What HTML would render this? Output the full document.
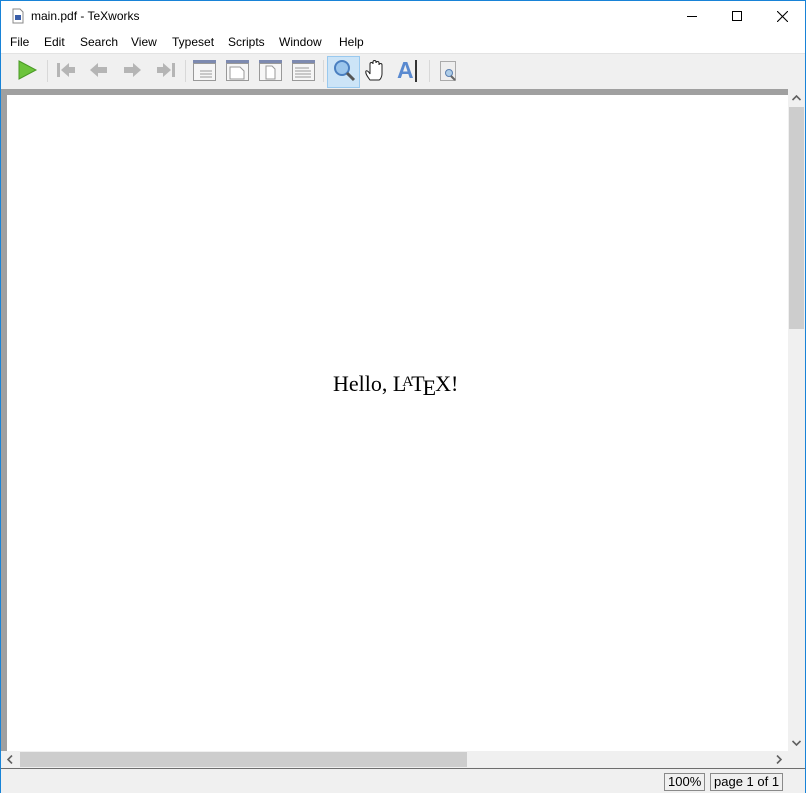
<!DOCTYPE html>
<html><head><meta charset="utf-8"><style>
*{margin:0;padding:0;box-sizing:border-box}
body{width:806px;height:793px;overflow:hidden;background:#f0f0f0;font-family:"Liberation Sans",sans-serif;font-size:12px;color:#000;position:relative}
.win{position:absolute;left:0;top:0;width:806px;height:793px;border:1px solid #1883d7;}
.title{position:absolute;left:0;top:0;width:804px;height:31px;background:#fff}
.title .t{position:absolute;left:30px;top:8px;font-size:12px}
.menu{position:absolute;left:0;top:31px;width:804px;height:21px;background:#fff}
.menu span{position:absolute;top:3px;font-size:12px}
.tb{position:absolute;left:0;top:52px;width:804px;height:36px;background:#f0f0f0;border-top:1px solid #e3e3e3}
.ic{position:absolute;top:4px;width:24px;height:24px}
.sep{position:absolute;top:6px;width:1px;height:22px;background:#d8d8d8}
.frame{position:absolute;left:0;top:88px;width:787px;height:662px;background:#a0a0a0}
.page{position:absolute;left:6px;top:94px;width:781px;height:656px;background:#fff}
.vs{position:absolute;left:787px;top:88px;width:17px;height:662px;background:#f0f0f0}
.hs{position:absolute;left:0;top:750px;width:787px;height:17px;background:#f0f0f0}
.status{position:absolute;left:0;top:767px;width:804px;height:25px;background:#f0f0f0;border-top:1px solid #6e6e6e}
.box{position:absolute;top:4px;height:18px;border:1px solid #8a8a8a;font-size:13px;line-height:16px;padding:0 3px}
.tex{position:absolute;left:332px;top:370px;font-family:"Liberation Serif",serif;font-size:22px;white-space:nowrap}
</style></head><body><div class="win">
<div class="title">
<svg style="position:absolute;left:11px;top:7px" width="12" height="16"><path d="M1 1h7l3 3v11H1z" fill="#fff" stroke="#888"/><rect x="3" y="7" width="6" height="5" fill="#3a5ea8"/></svg>
<span class="t">main.pdf - TeXworks</span>
<div style="position:absolute;left:686px;top:15px;width:10px;height:1px;background:#000"></div>
<div style="position:absolute;left:731px;top:10px;width:10px;height:10px;border:1px solid #000"></div>
<svg style="position:absolute;left:776px;top:10px" width="11" height="11"><path d="M0 0L11 11M11 0L0 11" stroke="#000" stroke-width="1.1"/></svg>
</div>
<div class="menu">
<span style="left:9px">File</span><span style="left:43px">Edit</span><span style="left:79px">Search</span><span style="left:130px">View</span><span style="left:171px">Typeset</span><span style="left:227px">Scripts</span><span style="left:278px">Window</span><span style="left:338px">Help</span>
</div>
<div class="tb">
<svg class="ic" style="left:14px"><path d="M4 3L21 12L4 21z" fill="#6cc43c" stroke="#4a9a26"/></svg>
<div class="sep" style="left:46px"></div>
<svg class="ic" style="left:53px"><rect x="3" y="5" width="3" height="14" fill="#b5b5b5"/><path d="M7 12l8-7v4h6v6h-6v4z" fill="#b5b5b5"/></svg>
<svg class="ic" style="left:86px"><path d="M3 12l8-7v4h9v6h-9v4z" fill="#b5b5b5"/></svg>
<svg class="ic" style="left:119px"><path d="M21 12l-8-7v4H4v6h9v4z" fill="#b5b5b5"/></svg>
<svg class="ic" style="left:153px"><rect x="18" y="5" width="3" height="14" fill="#b5b5b5"/><path d="M17 12l-8-7v4H3v6h6v4z" fill="#b5b5b5"/></svg>
<div class="sep" style="left:184px"></div>
<svg class="ic" style="left:191px"><rect x="1" y="2" width="23" height="3" fill="#7d8ab0"/><rect x="1.5" y="5.5" width="22" height="17" fill="#f6f6f6" stroke="#999"/><path d="M8 13h12M8 16h12M8 19h12" stroke="#999"/></svg>
<svg class="ic" style="left:224px"><rect x="1" y="2" width="23" height="3" fill="#7d8ab0"/><rect x="1.5" y="5.5" width="22" height="17" fill="#f6f6f6" stroke="#999"/><path d="M5 9h10l4 4v8H5z" fill="#fff" stroke="#999"/></svg>
<svg class="ic" style="left:257px"><rect x="1" y="2" width="23" height="3" fill="#7d8ab0"/><rect x="1.5" y="5.5" width="22" height="17" fill="#f6f6f6" stroke="#999"/><path d="M8 8h6l3 3v10H8z" fill="#fff" stroke="#999"/></svg>
<svg class="ic" style="left:290px"><rect x="1" y="2" width="23" height="3" fill="#7d8ab0"/><rect x="1.5" y="5.5" width="22" height="17" fill="#f6f6f6" stroke="#999"/><path d="M4 10h14M4 13h16M4 16h16M4 19h16" stroke="#999"/></svg>
<div class="sep" style="left:322px"></div>
<div style="position:absolute;left:326px;top:2px;width:33px;height:32px;background:#cce4f7;border:1px solid #99c9ef"></div>
<svg class="ic" style="left:331px"><circle cx="10" cy="10" r="7" fill="#9cc6ec" stroke="#4a7fc0" stroke-width="2"/><path d="M15 15l7 7" stroke="#555" stroke-width="3"/></svg>
<svg class="ic" style="left:363px"><path d="M6 22c-3-4-5-7-4-9 1-1 3 1 4 3V6c0-2 3-2 3 0V4c0-2 3-2 3 0v1c0-2 3-2 3 0v2c0-2 3-2 3 0v9c0 3-2 6-3 6z" fill="#fff" stroke="#222"/></svg>
<span style="position:absolute;left:396px;top:3px;font-size:23px;font-weight:bold;color:#5a8ad0">A</span><div style="position:absolute;left:414px;top:6px;width:2px;height:22px;background:#333"></div>
<div class="sep" style="left:428px"></div>
<svg class="ic" style="left:436px"><rect x="3.5" y="3.5" width="15" height="19" fill="#eee" stroke="#aaa"/><circle cx="12" cy="15" r="3.5" fill="#aecde8" stroke="#5a7fb0"/><path d="M14 18l4 4" stroke="#666" stroke-width="2"/></svg>
</div>
<div class="frame"></div>
<div class="page"></div>
<div class="tex">Hello, L<span style="font-size:15px;position:relative;top:-5px;margin-left:-4px">A</span><span style="margin-left:-2px">T</span><span style="position:relative;top:4px;margin-left:-2px">E</span><span style="margin-left:-1px">X!</span></div>
<div class="vs"><svg style="position:absolute;left:4px;top:6px" width="9" height="6"><path d="M0.5 5L4.5 1L8.5 5" fill="none" stroke="#606060" stroke-width="1.6"/></svg><div style="position:absolute;left:1px;top:18px;width:15px;height:222px;background:#cdcdcd"></div><svg style="position:absolute;left:4px;top:651px" width="9" height="6"><path d="M0.5 1L4.5 5L8.5 1" fill="none" stroke="#606060" stroke-width="1.6"/></svg></div>
<div class="hs"><svg style="position:absolute;left:6px;top:4px" width="6" height="9"><path d="M5 0.5L1 4.5L5 8.5" fill="none" stroke="#606060" stroke-width="1.6"/></svg><div style="position:absolute;left:19px;top:1px;width:447px;height:15px;background:#cdcdcd"></div><svg style="position:absolute;left:775px;top:4px" width="6" height="9"><path d="M1 0.5L5 4.5L1 8.5" fill="none" stroke="#606060" stroke-width="1.6"/></svg></div>
<div style="position:absolute;left:787px;top:750px;width:17px;height:17px;background:#f0f0f0"></div>
<div class="status"><div class="box" style="left:663px">100%</div><div class="box" style="left:709px">page 1 of 1</div></div>
</div></body></html>
